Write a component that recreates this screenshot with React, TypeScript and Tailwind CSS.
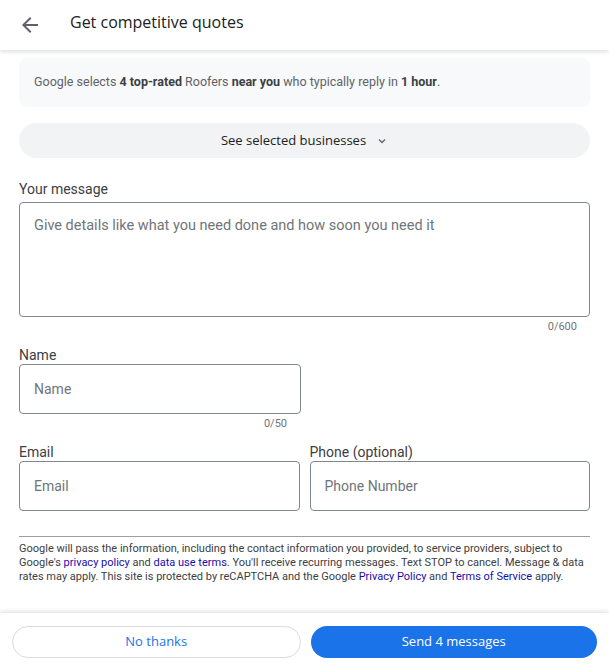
import React from "react";

const roboto = { fontFamily: "Roboto, 'Liberation Sans', sans-serif" };
const gsans = { fontFamily: "'Open Sans', Roboto, sans-serif" };

export default function App() {
  return (
    <div className="w-[609px] h-[667px] bg-white flex flex-col overflow-hidden" style={roboto}>
      {/* Header */}
      <div className="h-[50px] shrink-0 flex items-center bg-white shadow-[0_2px_4px_rgba(0,0,0,0.12)] relative z-10">
        <div className="w-[70px] flex items-center pl-[18px]">
          <svg width="24" height="24" viewBox="0 0 24 24" fill="#5f6368">
            <path d="M20 11H7.83l5.59-5.59L12 4l-8 8 8 8 1.41-1.41L7.83 13H20v-2z" />
          </svg>
        </div>
        <div className="text-[16px] text-[#202124] mt-[-6px]" style={gsans}>
          Get competitive quotes
        </div>
      </div>

      {/* Body */}
      <div className="flex-1 flex flex-col px-[19px]">
        <div className="mt-[8px] h-[49px] rounded-[8px] bg-[#f8f9fa] flex items-center px-[15px] text-[12.5px] text-[#5f6368]">
          <span>
            Google selects <b className="font-bold text-[#3c4043]">4 top-rated</b> Roofers{" "}
            <b className="font-bold text-[#3c4043]">near you</b> who typically reply in{" "}
            <b className="font-bold text-[#3c4043]">1 hour</b>.
          </span>
        </div>

        <div className="mt-[16px] h-[35px] rounded-full bg-[#f1f3f4] flex items-center justify-center gap-[10px] text-[13px] text-[#202124]" style={gsans}>
          <span>See selected businesses</span>
          <svg width="12" height="12" viewBox="0 0 24 24" fill="none" stroke="#5f6368" strokeWidth="2.5">
            <path d="M6 9l6 6 6-6" />
          </svg>
        </div>

        <div className="mt-[23px] text-[14px] leading-[16px] text-[#3c4043]">Your message</div>
        <div className="mt-[5px] h-[115px] rounded-[4px] border border-[#80868b] px-[14px] pt-[14px] text-[14.5px] leading-[18px] text-[#70757a]">
          Give details like what you need done and how soon you need it
        </div>
        <div className="mt-[3px] pr-[13px] text-right text-[11px] leading-[14px] text-[#70757a]">0/600</div>

        <div className="mt-[13px] text-[14px] leading-[16px] text-[#3c4043]">Name</div>
        <div className="mt-[1px] w-[282px] h-[50px] rounded-[4px] border border-[#80868b] px-[14px] flex items-center text-[14px] text-[#70757a]">
          Name
        </div>
        <div className="w-[282px] mt-[3px] pr-[14px] text-right text-[11px] leading-[14px] text-[#70757a]">0/50</div>

        <div className="mt-[13px] grid grid-cols-2 gap-x-[10px]">
          <div className="flex flex-col">
            <div className="text-[14px] leading-[16px] text-[#3c4043]">Email</div>
            <div className="mt-[1px] h-[50px] rounded-[4px] border border-[#80868b] px-[14px] flex items-center text-[14px] text-[#70757a]">
              Email
            </div>
          </div>
          <div className="flex flex-col">
            <div className="text-[14px] leading-[16px] text-[#3c4043]">Phone (optional)</div>
            <div className="mt-[1px] h-[50px] rounded-[4px] border border-[#80868b] px-[14px] flex items-center text-[14px] text-[#70757a]">
              Phone Number
            </div>
          </div>
        </div>

        <div className="mt-[25px] h-px bg-[#9aa0a6]" />
        <div className="mt-[5px] text-[11px] leading-[14px] text-[#3c4043]">
          Google will pass the information, including the contact information you provided, to service providers, subject to Google's{" "}
          <span className="text-[#1a0dab]">privacy policy</span> and <span className="text-[#1a0dab]">data use terms</span>. You'll receive recurring messages. Text STOP to cancel. Message &amp; data rates may apply. This site is protected by reCAPTCHA and the Google{" "}
          <span className="text-[#1a0dab]">Privacy Policy</span> and <span className="text-[#1a0dab]">Terms of Service</span> apply.
        </div>
      </div>

      {/* Footer */}
      <div className="h-[54px] shrink-0 flex gap-[10px] px-[12px] pt-[13px] bg-white shadow-[0_-2px_4px_rgba(0,0,0,0.1)]">
        <div className="flex-1 h-[32px] rounded-full border border-[#dadce0] flex items-center justify-center text-[13px] text-[#1a73e8]" style={gsans}>
          No thanks
        </div>
        <div className="flex-1 h-[32px] rounded-full bg-[#1a73e8] flex items-center justify-center text-[13px] font-medium text-white" style={gsans}>
          Send 4 messages
        </div>
      </div>
    </div>
  );
}
